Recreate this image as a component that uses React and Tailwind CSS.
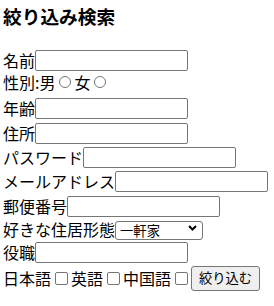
export default function App() {
  const box = 'h-[21px] w-[153px] rounded-[2px] border border-[#767676] bg-white'
  const check = 'ml-[4px] mr-[3px] h-[13px] w-[13px] appearance-none rounded-[2px] border border-[#767676] bg-white'
  const radio = 'ml-[4px] mr-[3px] h-[12px] w-[12px] appearance-none rounded-full border border-[#767676] bg-white'

  return (
    <div className="min-h-screen bg-white pl-[3px] text-[16px] text-black" style={{ fontFamily: '"Noto Sans CJK JP", "Noto Sans", sans-serif' }}>
      <h3 className="mt-[2px] text-[18.72px] font-bold leading-[27px]">絞り込み検索</h3>
      <form onSubmit={(e) => e.preventDefault()}>
        <div className="mt-[20px] flex h-[22px] items-center leading-[22px]">
          名前<input type="text" className={box} />
        </div>
        <div className="mt-[2px] flex h-[18px] items-center leading-[18px]">
          性別:男<input type="radio" name="sex" className={radio} />女<input type="radio" name="sex" className={radio} />
        </div>
        <div className="mt-[5px] flex h-[24px] items-center">
          年齢<input type="text" className={box} />
        </div>
        <div className="mt-[1px] flex h-[24px] items-center">
          住所<input type="text" className={box} />
        </div>
        <div className="flex h-[24px] items-center">
          パスワード<input type="password" className={box} />
        </div>
        <div className="flex h-[24px] items-center">
          メールアドレス<input type="email" className={box} />
        </div>
        <div className="mt-[1px] flex h-[24px] items-center">
          郵便番号<input type="text" className={box} />
        </div>
        <div className="flex h-[22px] items-center leading-[22px]">
          好きな住居形態
          <div className="relative">
            <select className="h-[19px] w-[88px] appearance-none rounded-[3px] border border-[#767676] bg-white pl-[4px] text-[13.33px] leading-[17px]">
              <option>一軒家</option>
              <option>マンション</option>
              <option>アパート</option>
            </select>
            <svg className="pointer-events-none absolute right-[6px] top-[7px]" width="9" height="6" viewBox="0 0 9 6">
              <path d="M1 1l3.5 3.5L8 1" fill="none" stroke="#000" strokeWidth="2" />
            </svg>
          </div>
        </div>
        <div className="flex h-[24px] items-center">
          役職<input type="text" className={box} />
        </div>
        <div className="mt-[1px] flex h-[26px] items-center">
          日本語<input type="checkbox" className={check} />英語<input type="checkbox" className={check} />中国語<input type="checkbox" className={check} />
          <button type="submit" className="h-[25px] w-[69px] rounded-[3px] border border-[#767676] bg-[#efefef] text-[13.33px]">
            絞り込む
          </button>
        </div>
      </form>
    </div>
  )
}
